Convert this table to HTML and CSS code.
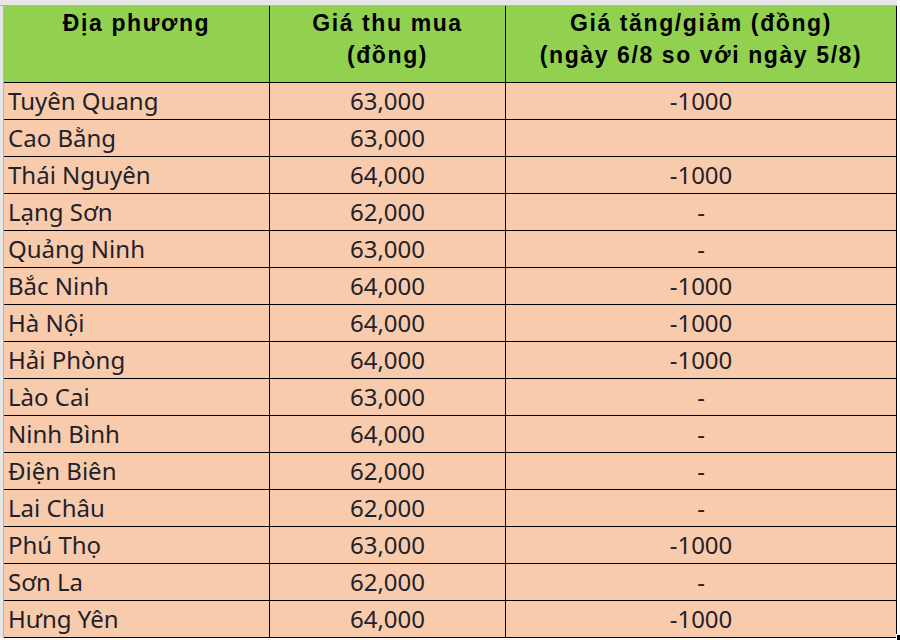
FILE: index.html
```html
<!DOCTYPE html>
<html lang="vi">
<head>
<meta charset="utf-8">
<title>Giá thu mua</title>
<link rel="stylesheet" href="styles.css">
</head>
<body>
<div class="frame">
  <div class="top-band"></div>
  <div class="main">
    <div class="gutter"></div>
    <div class="sheet">
      <div class="cell head">Địa phương</div>
      <div class="cell head">Giá thu mua<br>(đồng)</div>
      <div class="cell head">Giá tăng/giảm (đồng)<br>(ngày 6/8 so với ngày 5/8)</div>

      <div class="cell name">Tuyên Quang</div><div class="cell num">63,000</div><div class="cell num">-1000</div>
      <div class="cell name">Cao Bằng</div><div class="cell num">63,000</div><div class="cell num"></div>
      <div class="cell name">Thái Nguyên</div><div class="cell num">64,000</div><div class="cell num">-1000</div>
      <div class="cell name">Lạng Sơn</div><div class="cell num">62,000</div><div class="cell num">-</div>
      <div class="cell name">Quảng Ninh</div><div class="cell num">63,000</div><div class="cell num">-</div>
      <div class="cell name">Bắc Ninh</div><div class="cell num">64,000</div><div class="cell num">-1000</div>
      <div class="cell name">Hà Nội</div><div class="cell num">64,000</div><div class="cell num">-1000</div>
      <div class="cell name">Hải Phòng</div><div class="cell num">64,000</div><div class="cell num">-1000</div>
      <div class="cell name">Lào Cai</div><div class="cell num">63,000</div><div class="cell num">-</div>
      <div class="cell name">Ninh Bình</div><div class="cell num">64,000</div><div class="cell num">-</div>
      <div class="cell name">Điện Biên</div><div class="cell num">62,000</div><div class="cell num">-</div>
      <div class="cell name">Lai Châu</div><div class="cell num">62,000</div><div class="cell num">-</div>
      <div class="cell name">Phú Thọ</div><div class="cell num">63,000</div><div class="cell num">-1000</div>
      <div class="cell name">Sơn La</div><div class="cell num">62,000</div><div class="cell num">-</div>
      <div class="cell name">Hưng Yên</div><div class="cell num">64,000</div><div class="cell num last">-1000<span class="handle"></span></div>
    </div>
  </div>
</div>
</body>
</html>
```
FILE: styles.css
```css
* { box-sizing: border-box; }
html, body { margin: 0; padding: 0; background: #ffffff; }
body { width: 900px; height: 640px; overflow: hidden; }

.frame { display: flex; flex-direction: column; }

.top-band {
  height: 6px;
  width: 897px;
  background: #e6e6e6;
  border-bottom: 1px solid #b4b4b4;
}

.main { display: flex; }

.gutter {
  width: 4px;
  background: #e6e6e6;
  border-right: 1px solid #b4b4b4;
}

.sheet {
  display: grid;
  grid-template-columns: 266px 236px 391px;
  grid-template-rows: 77px repeat(15, 37px);
}

.cell {
  border-right: 1px solid #000;
  border-bottom: 1px solid #000;
  background: #f8cbad;
  color: #1f222a;
  font-family: "Noto Sans", "Open Sans", sans-serif;
  font-size: 24px;
  line-height: 36px;
  white-space: nowrap;
}

.head {
  background: #92d050;
  color: #000;
  font-family: "Liberation Sans", Arial, sans-serif;
  font-weight: bold;
  font-size: 23px;
  letter-spacing: 1.6px;
  line-height: 32px;
  text-align: center;
  padding-top: 1px;
}

.name { padding-left: 4px; }

.num { text-align: center; }

.last { position: relative; }

.handle {
  position: absolute;
  right: -6px;
  bottom: -4px;
  width: 6px;
  height: 7px;
  background: #000;
  border: 1px solid #fff;
}
```
